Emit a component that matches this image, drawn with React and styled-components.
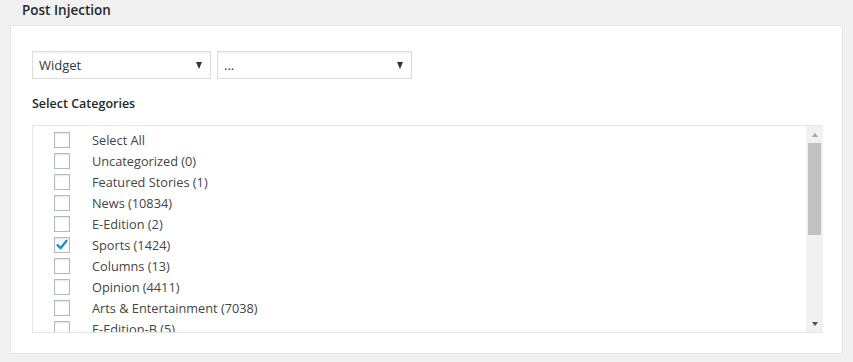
import React from "react";
import styled, { createGlobalStyle } from "styled-components";

const Global = createGlobalStyle`
  html, body { margin: 0; padding: 0; background: #f1f1f1; }
  body { font-family: "Open Sans", "Noto Sans", "Liberation Sans", sans-serif; color: #444; }
`;

const Page = styled.div`
  width: 853px;
  height: 362px;
  overflow: hidden;
  background: #f1f1f1;
`;

const Title = styled.h2`
  margin: 0;
  height: 25px;
  padding-left: 22px;
  font-size: 13.5px;
  font-weight: 600;
  line-height: 20px;
  color: #23282d;
`;

const Box = styled.div`
  margin: 0 10px;
  height: 329px;
  background: #fff;
  border: 1px solid #e5e5e5;
  padding: 25px 0 0 21px;
  box-sizing: border-box;
`;

const SelectRow = styled.div`
  display: flex;
  gap: 6px;
`;

const Select = styled.div`
  width: ${(p) => p.$w}px;
  height: 28px;
  box-sizing: border-box;
  border: 1px solid #ddd;
  box-shadow: inset 0 1px 2px rgba(0, 0, 0, 0.07);
  background: #fff;
  display: flex;
  align-items: center;
  justify-content: space-between;
  padding: 0 8px 0 6px;
  font-size: 13px;
  color: #32373c;
`;

const Arrow = styled.span`
  width: 0;
  height: 0;
  border-left: 3.5px solid transparent;
  border-right: 3.5px solid transparent;
  border-top: 7px solid ${(p) => p.$c || "#333"};
`;

const UpArrow = styled.span`
  width: 0;
  height: 0;
  border-left: 3.5px solid transparent;
  border-right: 3.5px solid transparent;
  border-bottom: 4px solid ${(p) => p.$c || "#a3a3a3"};
`;

const DownArrow = styled.span`
  width: 0;
  height: 0;
  border-left: 3.5px solid transparent;
  border-right: 3.5px solid transparent;
  border-top: 4px solid ${(p) => p.$c || "#505050"};
`;

const Label = styled.div`
  margin-top: 16px;
  font-size: 12.5px;
  font-weight: 600;
  color: #23282d;
  line-height: 18px;
`;

const ListBox = styled.div`
  margin-top: 12px;
  width: 791px;
  height: 208px;
  box-sizing: border-box;
  border: 1px solid #e5e5e5;
  border-right: none;
  display: flex;
`;

const Items = styled.div`
  flex: 1;
  overflow: hidden;
  padding: 3px 0 0 21px;
`;

const Row = styled.div`
  height: 21px;
  display: flex;
  align-items: center;
  font-size: 12.75px;
  color: #444;
`;

const Check = styled.span`
  width: 16px;
  height: 16px;
  box-sizing: border-box;
  border: 1px solid #b4b9be;
  background: #fff;
  box-shadow: inset 0 1px 2px rgba(0, 0, 0, 0.1);
  margin-right: 22px;
  display: flex;
  align-items: center;
  justify-content: center;
  flex-shrink: 0;
`;

const Scrollbar = styled.div`
  width: 17px;
  background: #f1f1f1;
  display: flex;
  flex-direction: column;
  align-items: center;
`;

const ScrollBtn = styled.div`
  height: 17px;
  width: 17px;
  display: flex;
  align-items: center;
  justify-content: center;
`;

const Thumb = styled.div`
  width: 13px;
  height: 92px;
  background: #c1c1c1;
`;

const Track = styled.div`
  flex: 1;
`;

const items = [
  ["Select All", false],
  ["Uncategorized (0)", false],
  ["Featured Stories (1)", false],
  ["News (10834)", false],
  ["E-Edition (2)", false],
  ["Sports (1424)", true],
  ["Columns (13)", false],
  ["Opinion (4411)", false],
  ["Arts & Entertainment (7038)", false],
  ["E-Edition-B (5)", false],
  ["Obituaries (120)", false],
];

export default function App() {
  return (
    <Page>
      <Global />
      <Title>Post Injection</Title>
      <Box>
        <SelectRow>
          <Select $w={179}>
            <span>Widget</span>
            <Arrow />
          </Select>
          <Select $w={195}>
            <span>...</span>
            <Arrow />
          </Select>
        </SelectRow>
        <Label>Select Categories</Label>
        <ListBox>
          <Items>
            {items.map(([t, c]) => (
              <Row key={t}>
                <Check>
                  {c && (
                    <svg width="14" height="14" viewBox="0 0 14 14">
                      <path
                        d="M2.5 7.2 L5.6 10.2 L11.5 2.8"
                        fill="none"
                        stroke="#1e8cbe"
                        strokeWidth="2.3"
                        strokeLinecap="round"
                        strokeLinejoin="round"
                      />
                    </svg>
                  )}
                </Check>
                {t}
              </Row>
            ))}
          </Items>
          <Scrollbar>
            <ScrollBtn>
              <UpArrow />
            </ScrollBtn>
            <Thumb />
            <Track />
            <ScrollBtn>
              <DownArrow />
            </ScrollBtn>
          </Scrollbar>
        </ListBox>
      </Box>
    </Page>
  );
}
